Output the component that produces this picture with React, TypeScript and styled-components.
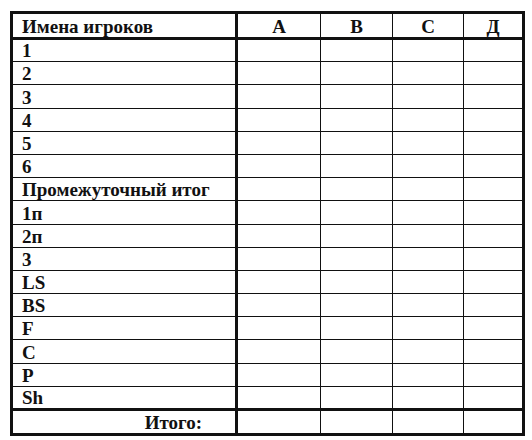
import styled, { createGlobalStyle } from "styled-components";

const GlobalStyle = createGlobalStyle`
  html, body {
    margin: 0;
    padding: 0;
    background: #ffffff;
  }
  body {
    font-family: "Liberation Serif", "Times New Roman", serif;
    color: #111111;
  }
`;

const Page = styled.div`
  padding: 11px 0 0 10px;
`;

const Sheet = styled.table`
  border-collapse: collapse;
  table-layout: fixed;
  width: 514px;
  border: 3px solid #111;
`;

const HeadCell = styled.th<{ $first?: boolean }>`
  height: 23px;
  padding: 0 0 0 ${(p) => (p.$first ? "9px" : "0")};
  font-size: 19px;
  font-weight: bold;
  text-align: ${(p) => (p.$first ? "left" : "center")};
  vertical-align: bottom;
  line-height: 20px;
  border-bottom: 3px solid #111;
  border-left: 1px solid #111;
  border-right: ${(p) => (p.$first ? "3px" : "1px")} solid #111;
`;

const Row = styled.tr<{ $total?: boolean }>`
  height: ${(p) => (p.$total ? "25px" : "23.2px")};
  border-top: ${(p) => (p.$total ? "3px" : "1.5px")} solid #111;
`;

const NameCell = styled.td<{ $total?: boolean }>`
  padding: 0 ${(p) => (p.$total ? "33px" : "0")} 0 ${(p) => (p.$total ? "0" : "9px")};
  font-size: 19px;
  font-weight: bold;
  line-height: 20px;
  vertical-align: bottom;
  text-align: ${(p) => (p.$total ? "right" : "left")};
  border-right: 3px solid #111;
  white-space: nowrap;
`;

const ScoreCell = styled.td`
  padding: 0;
  border-left: 1px solid #111;
  border-right: 1px solid #111;
`;

const teams = ["А", "В", "С", "Д"];
const widths = [225, 84, 72, 71, 60];
const players = [
  "1",
  "2",
  "3",
  "4",
  "5",
  "6",
  "Промежуточный итог",
  "1п",
  "2п",
  "3",
  "LS",
  "BS",
  "F",
  "C",
  "P",
  "Sh",
];

function App() {
  return (
    <>
      <GlobalStyle />
      <Page>
        <Sheet>
          <colgroup>
            {widths.map((w, i) => (
              <col key={i} style={{ width: w }} />
            ))}
          </colgroup>
          <thead>
            <tr>
              <HeadCell $first>Имена игроков</HeadCell>
              {teams.map((t) => (
                <HeadCell key={t}>{t}</HeadCell>
              ))}
            </tr>
          </thead>
          <tbody>
            {players.map((name, i) => (
              <Row key={i}>
                <NameCell>{name}</NameCell>
                {teams.map((t) => (
                  <ScoreCell key={t} />
                ))}
              </Row>
            ))}
            <Row $total>
              <NameCell $total>Итого:</NameCell>
              {teams.map((t) => (
                <ScoreCell key={t} />
              ))}
            </Row>
          </tbody>
        </Sheet>
      </Page>
    </>
  );
}

export default App;
